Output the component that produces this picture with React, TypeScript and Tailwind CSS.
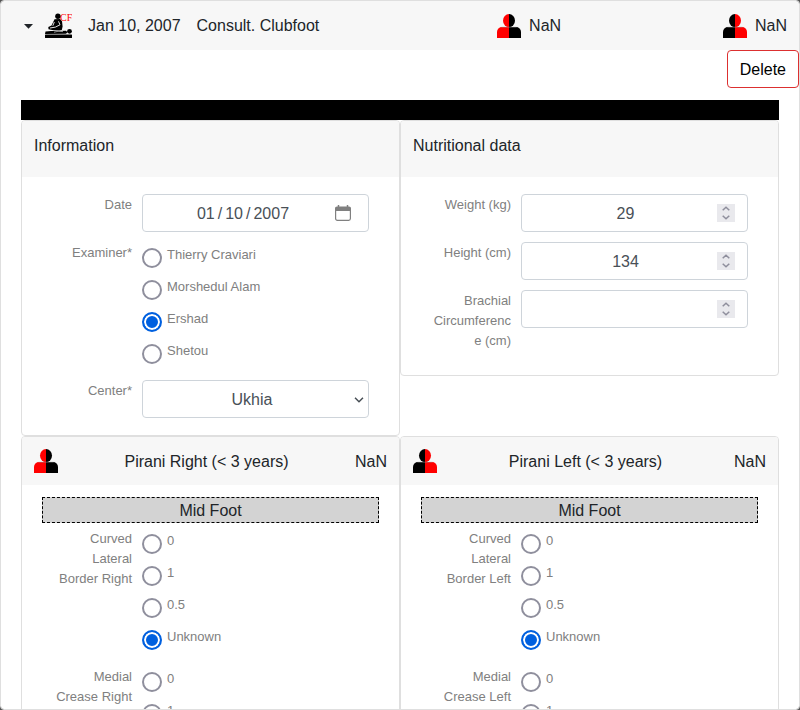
import { useId, useState } from "react";
import type { ReactNode } from "react";

const CONTROL =
  "block h-[38px] w-full rounded border border-[#ced4da] bg-white pt-0.5 text-center text-base leading-6 text-[#495057] outline-none focus:border-[#80bdff]";

function PersonIcon({ side }: { side: "left" | "right" }) {
  const left = side === "right" ? "#f00" : "#000";
  const right = side === "right" ? "#000" : "#f00";
  return (
    <svg viewBox="0 0 24 24" className="size-6 shrink-0" aria-hidden="true">
      <path d="M12 0a6 6.6 0 0 0 0 13.200z" fill={left} />
      <path d="M12 0a6 6.6 0 0 1 0 13.200z" fill={right} />
      <path d="M12 13H5a5 5 0 0 0-5 5v6h12z" fill={left} />
      <path d="M12 13h7a5 5 0 0 1 5 5v6H12z" fill={right} />
      <path d="M4.5 13.2h15" stroke="#999" strokeWidth="0.5" />
    </svg>
  );
}

function ClubfootIcon() {
  return (
    <svg viewBox="0 0 27 26" className="h-[26px] w-[27px] shrink-0" aria-hidden="true">
      <circle cx="12.9" cy="3.3" r="2.7" />
      <path d="M9.500 6.300l5.500-.2 2 2.200.6 5.200-.8 3.500-2.800.6-5.500-.4-5-.9-.2-2.300 3.200-1.500z" />
      <path d="M9.300 9l-1.500 3.800M5 15l5.500-.9 4.500-2.300-1.500-3.500" fill="none" stroke="#f7f7f7" strokeWidth="0.9" />
      <path d="M0.500 18.400l5.500-.5 6 .2 9-.3 1.500 1.500-1.500 1.500-21 .2z" />
      <path d="M9 19.200l4-.9 5 .3" fill="none" stroke="#f7f7f7" strokeWidth="0.6" />
      <circle cx="24.500" cy="18.300" r="2.400" />
      <rect x="0" y="21.500" width="27" height="3.500" rx="0.500" />
      <text x="15" y="8" fill="#f00" fontSize="10" fontFamily="Liberation Serif, serif">
        CF
      </text>
    </svg>
  );
}

function Card({ header, children }: { header: ReactNode; children: ReactNode }) {
  return (
    <section className="overflow-hidden rounded border border-[#dfdfdf] bg-white">
      {header}
      {children}
    </section>
  );
}

function Row({ label, htmlFor, labelId, children }: { label: string; htmlFor?: string; labelId?: string; children: ReactNode }) {
  const style = "pt-px pb-[7px] text-right text-[13px] leading-5 break-words text-[#808080]";
  return (
    <div className="grid grid-cols-[80px_minmax(0,1fr)] gap-x-2.5">
      {htmlFor ? (
        <label htmlFor={htmlFor} className={style}>
          {label}
        </label>
      ) : (
        <span id={labelId} className={style}>
          {label}
        </span>
      )}
      <div>{children}</div>
    </div>
  );
}

function NumberRow({ label, initial }: { label: string; initial: string }) {
  const id = useId();
  const [value, setValue] = useState(initial);
  const step = (by: number) => setValue(String(Number(value || 0) + by));
  return (
    <Row label={label} htmlFor={id}>
      <div className="relative">
        <input
          id={id}
          type="number"
          value={value}
          onChange={(e) => setValue(e.target.value)}
          className={`${CONTROL} pr-[30px] pl-3 [appearance:textfield] [&::-webkit-inner-spin-button]:appearance-none`}
        />
        <div className="absolute top-2.5 right-[13px] flex h-[18px] w-[18px] flex-col bg-[#e9e9ed] text-[#8f8f9d]">
          <button type="button" aria-label="Increase" onClick={() => step(1)} className="flex h-[9px] items-center justify-center">
            <svg viewBox="0 0 8 5" className="h-[5px] w-2" fill="none" stroke="currentColor" strokeWidth="1.5">
              <path d="M0.700 4.300L4 1.200l3.300 3.100" />
            </svg>
          </button>
          <button type="button" aria-label="Decrease" onClick={() => step(-1)} className="flex h-[9px] items-center justify-center">
            <svg viewBox="0 0 8 5" className="h-[5px] w-2" fill="none" stroke="currentColor" strokeWidth="1.5">
              <path d="M0.700 0.700L4 3.800 7.300 0.700" />
            </svg>
          </button>
        </div>
      </div>
    </Row>
  );
}

function RadioRow({ label, options, initial }: { label: string; options: string[]; initial: string }) {
  const id = useId();
  const [value, setValue] = useState(initial);
  return (
    <Row label={label} labelId={id}>
      <div role="radiogroup" aria-labelledby={id}>
        {options.map((option) => (
          <label key={option} className="flex h-8 items-start gap-[5px] text-[13px] leading-5 text-[#808080]">
            <input
              type="radio"
              name={id}
              checked={value === option}
              onChange={() => setValue(option)}
              className="mt-1.5 size-5 shrink-0 appearance-none rounded-full border-2 border-[#8f8f9d] bg-white checked:border-[#0060df] checked:bg-[#0060df] checked:shadow-[inset_0_0_0_2px_white]"
            />
            <span className="pt-[3px]">{option}</span>
          </label>
        ))}
      </div>
    </Row>
  );
}

function PlainHeader({ title }: { title: string }) {
  return (
    <header className="bg-[#f7f7f7] px-3 pt-[13px] pb-[19px]">
      <h2 className="text-base leading-6">{title}</h2>
    </header>
  );
}

function InformationCard() {
  const dateId = useId();
  const centerId = useId();
  return (
    <Card header={<PlainHeader title="Information" />}>
      <div className="flex flex-col gap-2.5 px-[30px] py-[17px]">
        <Row label="Date" htmlFor={dateId}>
          <div className="relative">
            <input
              id={dateId}
              type="date"
              defaultValue="2007-01-10"
              className={`${CONTROL} px-3 [&::-webkit-calendar-picker-indicator]:m-0 [&::-webkit-calendar-picker-indicator]:w-[25px] [&::-webkit-calendar-picker-indicator]:p-0 [&::-webkit-calendar-picker-indicator]:opacity-0 [&::-webkit-datetime-edit]:flex [&::-webkit-datetime-edit]:justify-center [&::-webkit-datetime-edit-text]:px-0.5`}
            />
            <svg viewBox="0 0 16 16" className="pointer-events-none absolute top-[11px] right-[18px] size-4 text-[#808080]" aria-hidden="true">
              <path d="M3.500 0v3M12.500 0v3" stroke="currentColor" strokeWidth="1.500" />
              <path d="M2 1.500h12a2 2 0 0 1 2 2V6H0V3.500a2 2 0 0 1 2-2z" fill="currentColor" />
              <rect x="0.600" y="2.500" width="14.800" height="12.900" rx="1.800" fill="none" stroke="currentColor" strokeWidth="1.200" />
            </svg>
          </div>
        </Row>
        <RadioRow label="Examiner*" options={["Thierry Craviari", "Morshedul Alam", "Ershad", "Shetou"]} initial="Ershad" />
        <Row label="Center*" htmlFor={centerId}>
          <div className="relative">
            <select id={centerId} defaultValue="Ukhia" className={`${CONTROL} appearance-none pr-[19px] pl-3`}>
              <option>Ukhia</option>
            </select>
            <svg viewBox="0 0 10 6" className="pointer-events-none absolute top-[17px] right-[5px] h-1.5 w-2.5" fill="none" stroke="#495057" strokeWidth="1.500" aria-hidden="true">
              <path d="M1 0.700l4 4 4-4" />
            </svg>
          </div>
        </Row>
      </div>
    </Card>
  );
}

function PiraniCard({ side }: { side: "Right" | "Left" }) {
  const scores = ["0", "1", "0.5", "Unknown"];
  return (
    <Card
      header={
        <header className="flex items-center justify-between bg-[#f7f7f7] px-3">
          <PersonIcon side={side === "Right" ? "right" : "left"} />
          <h2 className="pt-[13px] pb-[11px] text-base leading-6">Pirani {side} (&lt; 3 years)</h2>
          <span className="pt-[13px] pb-[11px]">NaN</span>
        </header>
      }
    >
      <div className="px-5 pt-3 pb-4">
        <h3 className="h-[26px] border border-dashed border-black bg-[#d3d3d3] pt-px text-center leading-6">Mid Foot</h3>
        <div className="flex flex-col gap-2.5 px-2.5 pt-[5px]">
          <RadioRow label={`Curved Lateral Border ${side}`} options={scores} initial="Unknown" />
          <RadioRow label={`Medial Crease ${side}`} options={scores} initial="Unknown" />
        </div>
      </div>
    </Card>
  );
}

export default function App() {
  return (
    <div className="h-screen bg-neutral-600 font-['Liberation_Sans',Arial,sans-serif] text-base leading-6 text-[#212529]">
      <main className="h-full overflow-y-auto rounded border border-[#dfdfdf] bg-white [scrollbar-width:none]">
        <header className="flex items-center justify-between bg-[#f7f7f7] px-3 pt-3 pb-[11px]">
          <div className="flex items-center gap-4 pr-4 pl-2.5">
            <div className="flex items-center gap-3">
              <button type="button" aria-label="Collapse" className="flex h-6 w-[10px] items-center">
                <svg viewBox="0 0 10 5" className="h-[5px] w-[10px]" fill="#212529">
                  <path d="M1 0h9L5.500 4.800z" />
                </svg>
              </button>
              <ClubfootIcon />
            </div>
            <span>Jan 10, 2007</span>
            <h1>Consult. Clubfoot</h1>
          </div>
          <div className="flex items-center gap-2">
            <PersonIcon side="right" />
            <span>NaN</span>
          </div>
          <div className="flex items-center gap-2">
            <PersonIcon side="left" />
            <span>NaN</span>
          </div>
        </header>
        <div className="flex justify-end">
          <button type="button" className="rounded border border-[#dc3030] bg-white px-3 pt-[7px] pb-[5px] text-black">
            Delete
          </button>
        </div>
        <div className="px-5 pt-3 pb-5">
          <div className="h-5 bg-black" />
          <div className="grid grid-cols-2 items-start">
            <InformationCard />
            <Card header={<PlainHeader title="Nutritional data" />}>
              <div className="flex flex-col gap-2.5 px-[30px] py-[17px]">
                <NumberRow label="Weight (kg)" initial="29" />
                <NumberRow label="Height (cm)" initial="134" />
                <NumberRow label="Brachial Circumference (cm)" initial="" />
              </div>
            </Card>
            <PiraniCard side="Right" />
            <PiraniCard side="Left" />
          </div>
        </div>
      </main>
    </div>
  );
}
